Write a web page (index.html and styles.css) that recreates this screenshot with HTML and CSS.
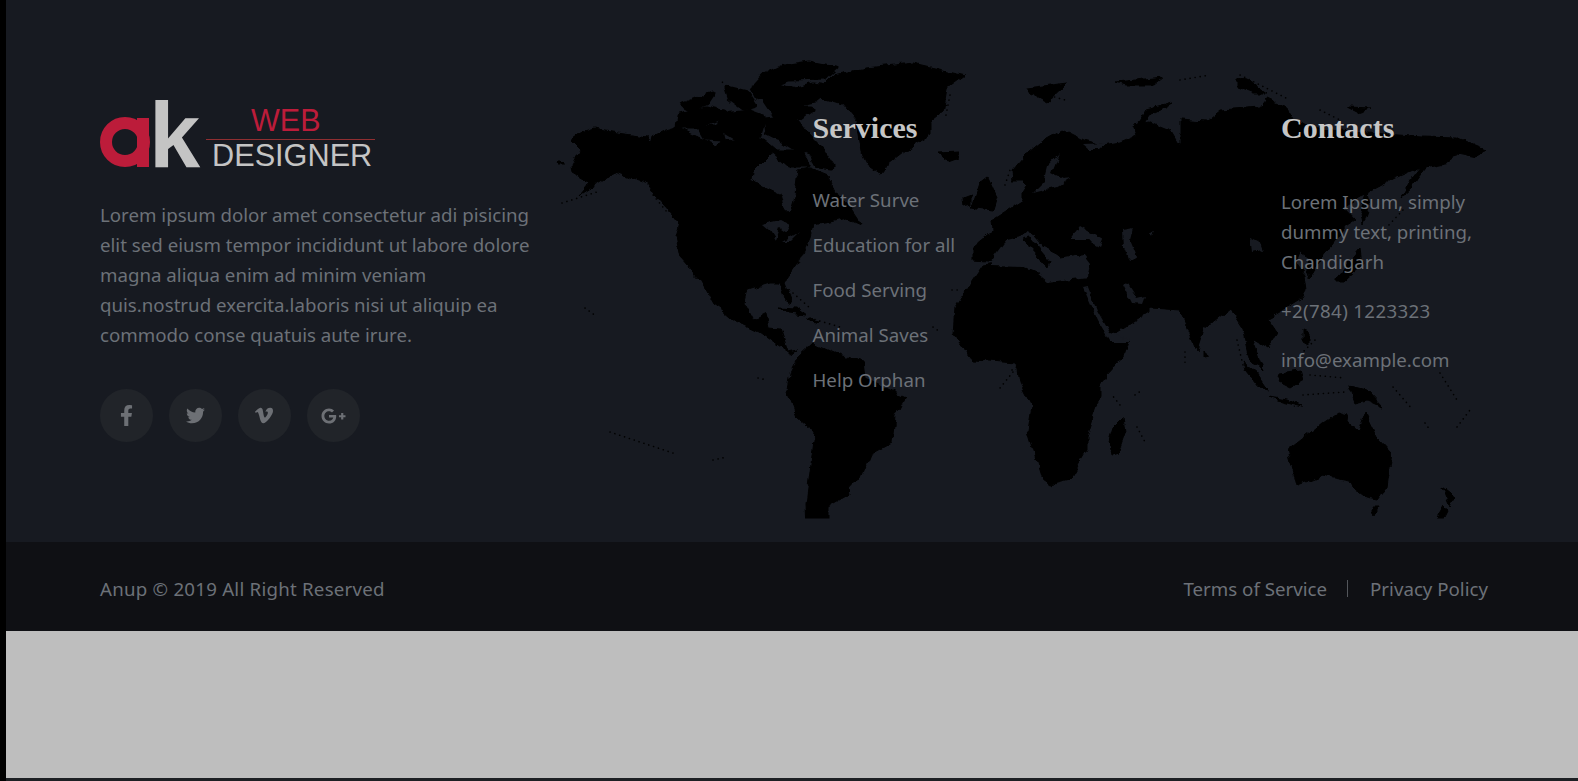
FILE: index.html
```html
<!DOCTYPE html>
<html lang="en">
<head>
<meta charset="utf-8">
<title>Footer</title>
<link rel="stylesheet" href="styles.css">
</head>
<body>
<div class="page">
  <footer class="footer">
    <section class="footer-main">
      <svg class="map" viewBox="550 50 960 480" aria-hidden="true">
        <defs>
          <filter id="coast" filterUnits="userSpaceOnUse" x="540" y="40" width="980" height="500" color-interpolation-filters="sRGB">
            <feTurbulence type="fractalNoise" baseFrequency="0.09" numOctaves="3" seed="7"/>
            <feDisplacementMap in="SourceGraphic" scale="7" xChannelSelector="R" yChannelSelector="G"/>
          </filter>
          <clipPath id="mapclip"><rect x="540" y="40" width="980" height="478.5"/></clipPath>
        </defs>
        <g clip-path="url(#mapclip)">
        <g filter="url(#coast)">
        <g class="land arctic">
          <polygon points="783,67 810,63 835,68 825,77 790,78 770,85 753,88 763,77"/>
          <polygon points="752,87 777,85 797,90 813,85 830,88 815,100 793,105 770,100 757,97"/>
          <polygon points="680,115 707,108 723,112 717,120 697,127 678,127"/>
          <polygon points="683,105 713,93 707,102 690,109"/>
          <polygon points="727,88 747,93 755,105 745,108 730,97"/>
          <polygon points="765,120 783,118 797,122 807,135 823,152 832,167 817,165 813,154 793,147 777,137 767,132"/>
          <polygon points="723,115 750,112 763,117 757,137 737,137 720,127"/>
          <polygon points="700,128 720,128 722,138 705,137"/>
          <polygon points="765,100 790,108 812,108 800,117 775,115"/>
          <polygon points="775,152 800,152 808,165 790,165"/>
        </g>
        <g class="land">
          <polygon points="570,140 580,133 593,129 617,133 647,137 650,146 652,137 667,130 677,127 698,137 717,145 720,140 747,138 763,138 777,150 770,155 753,172 752,180 763,187 780,195 783,207 790,213 795,195 798,170 810,168 827,175 837,195 850,207 862,225 846,218 830,222 813,225 810,237 798,263 785,282 792,300 787,303 780,283 770,283 747,290 744,303 753,320 767,313 770,327 780,328 788,352 798,350 790,354 780,347 760,333 737,322 723,310 713,303 700,280 680,257 676,237 680,223 657,197 647,183 615,172 603,180 580,195 590,183 573,173 572,165 580,150"/>
          <polygon points="833,75 867,68 913,63 965,75 947,88 943,112 930,122 930,135 903,152 890,162 880,175 870,168 862,152 857,122 843,105 820,98 813,95"/>
          <polygon points="937,153 960,152 958,157 947,161"/>
          <polygon points="557,162 561,162 564,165 559,165"/>
          <polygon points="778,307 797,308 807,315 790,313"/>
          <polygon points="808,318 820,320 815,323"/>
          <polygon points="790,373 798,357 813,343 840,355 863,362 865,378 905,397 895,417 892,443 870,455 860,480 847,487 848,495 827,507 827,530 807,530 806,503 815,433 797,417 787,390"/>
          <polygon points="973,260 973,247 993,230 992,220 1023,200 1023,193 1028,185 1023,180 1013,180 1012,170 1023,157 1040,143 1063,130 1083,140 1103,145 1120,142 1137,135 1133,125 1150,122 1170,130 1180,147 1180,120 1205,122 1220,110 1260,107 1267,98 1287,107 1290,117 1310,128 1350,132 1385,134 1423,137 1457,138 1487,150 1477,157 1457,153 1450,163 1425,168 1417,178 1412,187 1401,197 1410,180 1420,167 1395,178 1367,193 1343,207 1355,220 1347,225 1332,245 1325,253 1318,262 1316,270 1310,278 1305,270 1310,258 1300,252 1296,262 1305,275 1307,290 1303,297 1277,313 1268,318 1278,333 1268,348 1255,340 1253,345 1263,372 1250,358 1243,328 1230,308 1203,330 1197,350 1180,310 1150,308 1150,312 1113,335 1130,342 1128,342 1123,357 1100,383 1100,397 1087,437 1087,450 1070,480 1050,485 1043,480 1028,430 1032,407 1020,383 1017,363 973,360 953,333 955,307 983,265 1000,262"/>
          <polygon points="1123,417 1125,433 1118,453 1112,455 1109,440 1113,427"/>
          <polygon points="1288,450 1310,433 1323,422 1338,412 1348,415 1347,422 1358,432 1365,412 1377,437 1392,453 1387,487 1377,500 1367,498 1352,487 1349,480 1323,475 1297,485 1295,477"/>
          <polygon points="1372,508 1378,508 1375,515"/>
          <polygon points="1348,385 1367,390 1383,407 1367,400 1355,403"/>
          <polygon points="1442,487 1455,497 1449,507 1445,497"/>
          <polygon points="1444,506 1447,510 1437,530 1430,530"/>
          <polygon points="1280,373 1300,370 1303,380 1290,388 1278,382"/>
          <polygon points="1243,362 1257,373 1270,392 1260,387 1247,370"/>
          <polygon points="1270,397 1287,400 1303,407 1283,402"/>
          <polygon points="1203,350 1207,357 1203,358"/>
          <polygon points="1360,250 1362,265 1345,280 1335,280 1350,262"/>
          <polygon points="1366,193 1369,205 1362,225 1360,215"/>
          <polygon points="1303,330 1308,332 1308,345 1303,342"/>
          <polygon points="1173,103 1147,110 1137,125 1143,127 1150,115"/>
          <polygon points="1027,88 1067,83 1047,102 1030,93"/>
          <polygon points="1117,82 1163,77 1153,85 1127,85"/>
          <polygon points="1237,78 1247,80 1267,93 1253,93 1237,87"/>
          <polygon points="1347,107 1370,108 1357,112"/>
          <polygon points="972,207 980,183 988,177 997,197 993,210 977,208"/>
          <polygon points="963,198 971,195 971,205 964,207"/>
        </g>
        <g class="sea">
          <polygon points="1060,153 1047,167 1043,183 1033,193 1057,187 1073,177 1062,178 1052,173 1057,160"/>
          <polygon points="1083,144 1108,143 1100,150 1090,150"/>
          <polygon points="990,263 1007,240 1020,237 1030,232 1043,247 1057,253 1080,250 1090,263 1088,277 1048,282 1037,273 1023,267 990,266"/>
          <polygon points="1070,240 1080,227 1103,240 1100,247 1087,240"/>
          <polygon points="1122,230 1133,228 1130,240 1137,257 1128,260 1123,247"/>
          <polygon points="1150,232 1154,230 1152,236"/>
          <polygon points="1083,288 1088,287 1097,310 1110,333 1130,339 1129,342 1110,342 1097,320"/>
          <polygon points="1122,283 1128,284 1137,298 1145,296 1142,304 1132,303"/>
          <polygon points="763,224 780,220 790,225 786,232 780,228 776,240 770,230"/>
          <polygon points="783,242 800,232 790,242"/>
          <polygon points="1250,236 1258,240 1262,250 1252,252"/>
        </g>
        <g class="land">
          <polygon points="1023,240 1030,238 1050,262 1048,268 1040,258"/>
          <polygon points="1056,252 1070,248 1082,250 1086,254 1060,258"/>
        </g>
        </g>
        </g>
        <g class="dots">
          <polyline points="610,432 673,453"/><polyline points="713,460 727,457"/><polyline points="585,308 596,316"/><polyline points="758,378 767,380"/><polyline points="793,293 810,308"/><polyline points="810,318 840,327"/><polyline points="933,327 940,332"/><polyline points="952,290 960,290"/><polyline points="1012,370 1020,365"/><polyline points="1185,352 1185,365"/><polyline points="1237,340 1243,365"/><polyline points="1135,395 1142,390"/><polyline points="1137,427 1145,442"/><polyline points="1393,387 1413,410"/><polyline points="1440,373 1457,400"/><polyline points="1425,423 1430,430"/><polyline points="1457,427 1470,410"/><polyline points="1303,395 1345,392"/><polyline points="1310,375 1345,378"/><polyline points="1315,340 1300,355"/><polyline points="562,203 597,192"/><polyline points="653,195 667,212"/><polyline points="1403,210 1387,227"/><polyline points="1320,110 1340,120"/><polyline points="1120,405 1112,395"/><polyline points="1030,90 1065,100"/><polyline points="1240,75 1290,100"/><polyline points="1180,80 1210,75"/><polyline points="745,103 720,80"/><polyline points="795,155 810,150"/><polyline points="950,95 945,120"/><polyline points="1005,185 1010,170"/><polyline points="1013,372 1000,388"/>
        </g>
      </svg>
      <div class="about">
        <svg class="logo" viewBox="0 -24 276 116" role="img" aria-label="ak Web Designer">
          <circle class="logo-ring" cx="25" cy="42" r="19"/>
          <rect class="logo-red" x="37" y="18" width="12" height="49"/>
          <text class="logo-k" x="49" y="67">k</text>
          <text class="logo-web" x="151" y="31">WEB</text>
          <rect class="logo-line" x="106" y="39" width="169" height="1"/>
          <text class="logo-designer" x="112" y="66">DESIGNER</text>
        </svg>
        <p class="about-text">Lorem ipsum dolor amet consectetur adi pisicing elit sed eiusm tempor incididunt ut labore dolore magna aliqua enim ad minim veniam quis.nostrud exercita.laboris nisi ut aliquip ea commodo conse quatuis aute irure.</p>
        <div class="socials">
          <a class="social" href="#" aria-label="Facebook"><svg class="i-f" viewBox="0 0 320 512"><path d="M279.14 288l14.22-92.66h-88.91v-60.13c0-25.35 12.42-50.06 52.24-50.06h40.42V6.26S260.43 0 225.36 0c-73.22 0-121.08 44.38-121.08 124.72v70.62H22.89V288h81.39v224h100.17V288z"/></svg></a>
          <a class="social" href="#" aria-label="Twitter"><svg class="i-t" viewBox="0 0 512 512"><path d="M459.37 151.716c.325 4.548.325 9.097.325 13.645 0 138.72-105.583 298.558-298.558 298.558-59.452 0-114.68-17.219-161.137-47.106 8.447.974 16.568 1.299 25.34 1.299 49.055 0 94.213-16.568 130.274-44.832-46.132-.975-84.792-31.188-98.112-72.772 6.498.974 12.995 1.624 19.818 1.624 9.421 0 18.843-1.3 27.614-3.573-48.081-9.747-84.143-51.98-84.143-102.985v-1.299c13.969 7.797 30.214 12.67 47.431 13.319-28.264-18.843-46.781-51.005-46.781-87.391 0-19.492 5.197-37.36 14.294-52.954 51.655 63.675 129.3 105.258 216.365 109.807-1.624-7.797-2.599-15.918-2.599-24.04 0-57.828 46.782-104.934 104.934-104.934 30.213 0 57.502 12.67 76.67 33.137 23.715-4.548 46.456-13.32 66.599-25.34-7.798 24.366-24.366 44.833-46.132 57.827 21.117-2.273 41.584-8.122 60.426-16.243-14.292 20.791-32.161 39.308-52.628 54.253z"/></svg></a>
          <a class="social" href="#" aria-label="Vimeo"><svg class="i-v" viewBox="0 50 448 420"><path d="M447.8 153.6c-2 43.6-32.4 103.3-91.4 179.1-60.9 79.2-112.4 118.8-154.6 118.8-26.1 0-48.2-24.1-66.3-72.3C100.3 250 85.3 174.3 56.2 174.3c-3.4 0-15.1 7.1-35.2 21.1L0 168.2c51.6-45.3 100.9-95.7 131.8-98.5 34.9-3.4 56.3 20.5 64.4 71.5 28.7 181.5 41.4 208.9 93.6 126.7 18.7-29.6 28.8-52.1 30.2-67.6 4.8-45.9-35.8-42.8-63.3-31 22-72.1 64.1-107.1 126.2-105.1 45.8 1.2 67.5 31.1 64.9 89.4z"/></svg></a>
          <a class="social" href="#" aria-label="Google Plus"><svg class="i-g" viewBox="0 0 640 512"><path d="M386.061 228.496c1.834 9.692 3.143 19.384 3.143 31.956C389.204 370.205 315.599 448 204.8 448c-106.084 0-192-85.915-192-192s85.916-192 192-192c51.864 0 95.083 18.859 128.611 50.292l-52.126 50.03c-14.145-13.621-39.028-29.599-76.485-29.599-65.484 0-118.92 54.221-118.92 121.277 0 67.056 53.436 121.277 118.92 121.277 75.961 0 104.513-54.745 108.965-82.773H204.8v-66.009h181.261zm185.406 6.437V179.2h-56.001v55.733h-55.733v56.001h55.733v55.733h56.001v-55.733H627.2v-56.001h-55.733z"/></svg></a>
        </div>
      </div>
      <div class="col">
        <h3 class="col-title">Services</h3>
        <ul class="links">
          <li>Water Surve</li>
          <li>Education for all</li>
          <li>Food Serving</li>
          <li>Animal Saves</li>
          <li>Help Orphan</li>
        </ul>
      </div>
      <div class="col">
        <h3 class="col-title">Contacts</h3>
        <p class="contact-item contact-first">Lorem Ipsum, simply dummy text, printing, Chandigarh</p>
        <p class="contact-item contact-phone">+2(784) 1223323</p>
        <p class="contact-item">info@example.com</p>
      </div>
    </section>
    <section class="footer-bar">
      <span class="copyright">Anup © 2019 All Right Reserved</span>
      <nav class="legal"><span>Terms of Service</span><i class="divider"></i><span>Privacy Policy</span></nav>
    </section>
  </footer>
  <div class="blank"></div>
  <div class="edge"></div>
</div>
</body>
</html>
```
FILE: styles.css
```css
* { box-sizing: border-box; }
html, body { margin: 0; height: 781px; overflow: hidden; background: #000; }
body {
  font-family: "Noto Sans", "Open Sans", sans-serif;
  font-size: 18.7px;
  line-height: 30px;
  color: #6c7178;
}
.page { margin-left: 6px; height: 781px; display: flex; flex-direction: column; }
.footer-main {
  position: relative;
  height: 542px;
  padding: 100px 90px 0 94px;
  background: #171a21;
  display: grid;
  grid-template-columns: 712.5px 468.5px 1fr;
}
.map { position: absolute; left: 544px; top: 50px; width: 960px; height: 480px; }
.land { fill: #000; stroke: #000; stroke-width: 1; stroke-linejoin: round; }
.arctic { stroke-width: 5; }
.sea { fill: #171a21; }
.dots polyline { fill: none; stroke: #000; stroke-width: 1.6; stroke-linecap: round; stroke-dasharray: 0.1 5; }
.about, .col { position: relative; }
.logo { display: block; width: 276px; height: 116px; margin: -24px 0 -24px; }
.logo-ring { fill: none; stroke: #bc1c3a; stroke-width: 12; }
.logo-red { fill: #bc1c3a; }
.logo-k { font: bold 92px "Liberation Sans", sans-serif; fill: #c4c4c4; }
.logo-web { font: 30.5px "Liberation Sans", sans-serif; fill: #bc1c3a; }
.logo-designer { font: 30.7px "Liberation Sans", sans-serif; fill: #c4c4c4; }
.logo-line { fill: #8f2e31; }
.about-text { margin: 32px 0 0; width: 440px; }
.socials { display: flex; gap: 16.5px; margin-top: 39px; }
.social { width: 52.5px; height: 53px; border-radius: 50%; background: #212429; display: flex; align-items: center; justify-content: center; }
.social svg { fill: #6d7075; display: block; }
.i-f { width: 13px; height: 21px; }
.i-t { width: 19px; height: 19px; }
.i-v { width: 18px; height: 17px; }
.i-g { width: 25px; height: 20px; }
.col-title { margin: 9px 0 0; font: bold 30px/38px "Liberation Serif", serif; color: #c6c6c6; }
.links { list-style: none; margin: 38px 0 0; padding: 0; display: flex; flex-direction: column; gap: 15px; }
.contact-item { margin: 19px 0 0; width: 200px; }
.contact-first { margin-top: 40px; }
.contact-phone { letter-spacing: 0.35px; }
.footer-bar {
  height: 89px;
  padding: 4px 90px 0 94px;
  background: #0f1014;
  display: flex;
  align-items: center;
  justify-content: space-between;
}
.copyright { letter-spacing: 0.23px; }
.legal { display: flex; align-items: center; }
.divider { width: 1px; height: 17px; background: #53565b; margin: 0 22px 0 20px; }
.blank { height: 147px; background: #bebebe; }
.edge { flex: 1; background: #1d2024; }
```
